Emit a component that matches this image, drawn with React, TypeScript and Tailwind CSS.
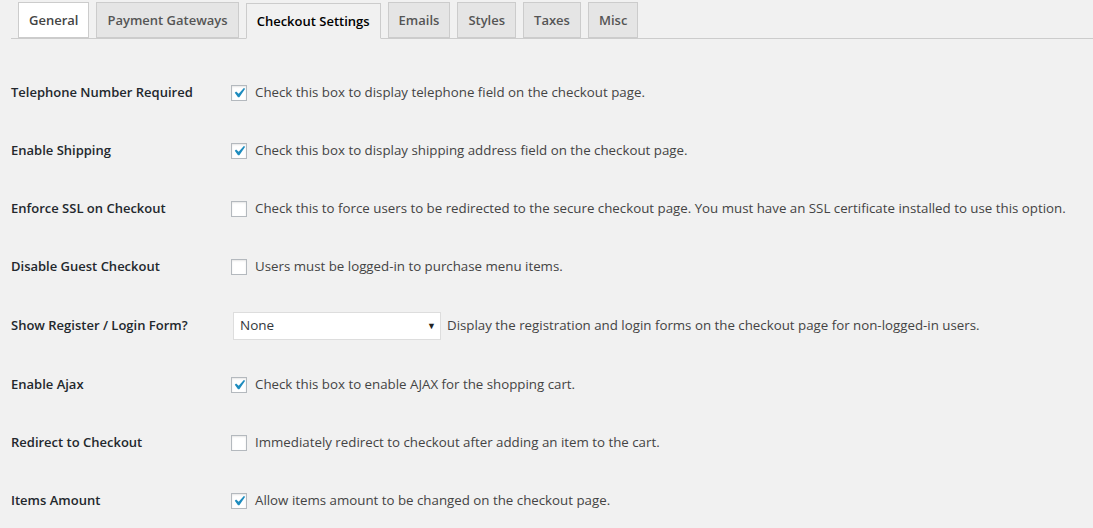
const tabs = ['General', 'Payment Gateways', 'Checkout Settings', 'Emails', 'Styles', 'Taxes', 'Misc'];

type Row = {
  label: string;
  kind: 'check' | 'select';
  checked?: boolean;
  text: string;
};

const rows: Row[] = [
  { label: 'Telephone Number Required', kind: 'check', checked: true, text: 'Check this box to display telephone field on the checkout page.' },
  { label: 'Enable Shipping', kind: 'check', checked: true, text: 'Check this box to display shipping address field on the checkout page.' },
  {
    label: 'Enforce SSL on Checkout',
    kind: 'check',
    checked: false,
    text: 'Check this to force users to be redirected to the secure checkout page. You must have an SSL certificate installed to use this option.',
  },
  { label: 'Disable Guest Checkout', kind: 'check', checked: false, text: 'Users must be logged-in to purchase menu items.' },
  { label: 'Show Register / Login Form?', kind: 'select', text: 'Display the registration and login forms on the checkout page for non-logged-in users.' },
  { label: 'Enable Ajax', kind: 'check', checked: true, text: 'Check this box to enable AJAX for the shopping cart.' },
  { label: 'Redirect to Checkout', kind: 'check', checked: false, text: 'Immediately redirect to checkout after adding an item to the cart.' },
  { label: 'Items Amount', kind: 'check', checked: true, text: 'Allow items amount to be changed on the checkout page.' },
];

const Checkbox = ({ checked }: { checked?: boolean }) => (
  <span className="flex h-4 w-4 shrink-0 items-center justify-center overflow-visible border border-[#b4b9be] bg-white shadow-[inset_0_1px_2px_rgba(0,0,0,0.1)]">
    {checked && (
      <svg width="20" height="20" viewBox="0 0 20 20" className="-m-[3px] shrink-0">
        <path d="M14.83 4.89l1.34.94-5.81 8.38H9.02L5.78 9.67l1.34-1.25 2.57 2.4z" fill="#1e8cbe" />
      </svg>
    )}
  </span>
);

const App = () => {
  return (
    <div className="min-h-[528px] w-[1093px] overflow-hidden bg-[#f1f1f1] pl-[11px] font-['Open_Sans',sans-serif] text-[#444]">
      {/* tabs */}
      <div className="flex items-end gap-[7px] border-b border-[#ccc] pl-[7px] pt-[2px]">
        {tabs.map((t) => {
          const active = t === 'Checkout Settings';
          const hover = t === 'General';
          return (
            <div
              key={t}
              className={
                active
                  ? '-mb-px border border-[#ccc] border-b-[#f1f1f1] bg-[#f1f1f1] px-[10px] py-[5px] text-[13px] leading-6 font-semibold text-black'
                  : hover
                    ? 'border border-[#ccc] bg-white px-[10px] py-[5px] text-[13px] leading-6 font-semibold text-[#444]'
                    : 'border border-[#ccc] bg-[#e5e5e5] px-[10px] py-[5px] text-[13px] leading-6 font-semibold text-[#555]'
              }
            >
              {t}
            </div>
          );
        })}
      </div>

      {/* settings */}
      <div className="flex flex-col pt-[25px]">
        {rows.map((r) =>
          r.kind === 'check' ? (
            <div key={r.label} className="flex h-[58px] items-center">
              <div className="w-[220px] shrink-0 text-[13px] font-semibold text-[#23282d]">{r.label}</div>
              <div className="flex items-center gap-[8px]">
                <Checkbox checked={r.checked} />
                <span className="whitespace-nowrap text-[13.3px]">{r.text}</span>
              </div>
            </div>
          ) : (
            <div key={r.label} className="flex h-[60px] items-center pb-px">
              <div className="w-[220px] shrink-0 text-[13px] font-semibold text-[#23282d]">{r.label}</div>
              <div className="flex items-center gap-[6px]">
                <div className="ml-[2px] flex h-[28px] w-[208px] items-center justify-between border border-[#ddd] bg-white pl-[6px] pr-[4px] text-[13.5px] text-[#32373c]">
                  <span>None</span>
                  <span className="text-[9px] text-[#222]">▼</span>
                </div>
                <span className="whitespace-nowrap text-[13.3px]">{r.text}</span>
              </div>
            </div>
          ),
        )}
      </div>
    </div>
  );
};

export default App;
